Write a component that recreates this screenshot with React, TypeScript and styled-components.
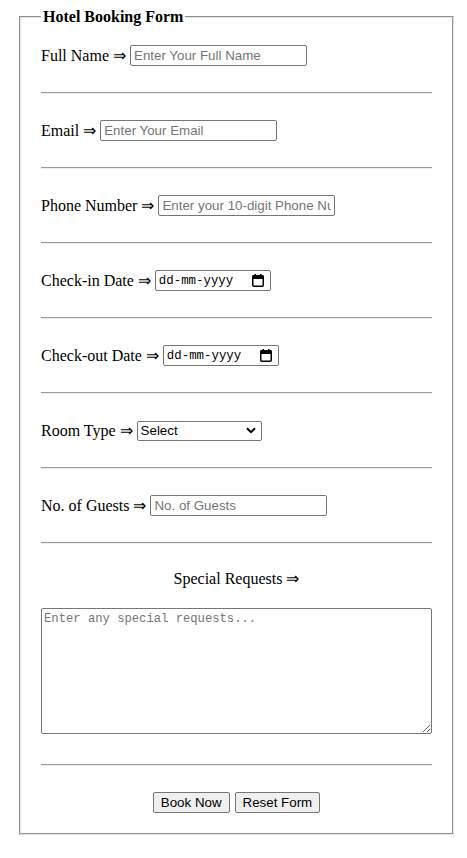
import React from 'react';
import styled, { createGlobalStyle } from 'styled-components';

const GlobalStyle = createGlobalStyle`
    body {
        margin: 8px;
        font-family: "Liberation Serif", "Times New Roman", serif;
        font-size: 16px;
        color: #000;
        background: #fff;
    }
`;

const Fieldset = styled.fieldset`
    width: 391px;
    margin: 0 0 0 11px;
    padding: 19px 20px 20px;
    border: 2px groove #e4e4e4;
`;

const Legend = styled.legend`
    font-weight: bold;
    padding: 0 2px;
`;

const Row = styled.div`
    display: flex;
    align-items: center;
    gap: 4px;
    height: 21px;
    white-space: nowrap;
`;

const Divider = styled.hr`
    margin: 26px 0;
    border: none;
    border-top: 1px solid #9a9a9a;
    border-bottom: 1px solid #eeeeee;
    height: 0;
`;

const TextInput = styled.input`
    box-sizing: border-box;
    width: 177px;
    height: 21px;
    padding: 1px 3px;
    border: 1px solid #767676;
    border-radius: 2px;
    font-family: "Liberation Sans", Arial, sans-serif;
    font-size: 13.333px;
    &::placeholder {
        color: #757575;
    }
`;

const DateBox = styled.div`
    box-sizing: border-box;
    display: inline-flex;
    align-items: center;
    justify-content: space-between;
    width: 116px;
    height: 21px;
    padding: 0 6px 0 3px;
    border: 1px solid #767676;
    border-radius: 2px;
`;

const DateInput = styled.input`
    width: 80px;
    padding: 0;
    border: none;
    outline: none;
    font-family: "Liberation Mono", Consolas, monospace;
    font-size: 12.4px;
    &::placeholder {
        color: #000;
    }
`;

const SelectWrap = styled.div`
    position: relative;
    display: inline-block;
`;

const Select = styled.select`
    box-sizing: border-box;
    width: 125px;
    height: 20px;
    padding: 0 0 0 3px;
    border: 1px solid #767676;
    border-radius: 2px;
    background: #fff;
    appearance: none;
    font-family: "Liberation Sans", Arial, sans-serif;
    font-size: 13.333px;
    color: #000;
`;

const Chevron = styled.svg`
    position: absolute;
    right: 6px;
    top: 6px;
    pointer-events: none;
`;

const CenterLabel = styled.div`
    text-align: center;
    line-height: 18px;
    margin-bottom: 20px;
`;

const TextArea = styled.textarea`
    display: block;
    box-sizing: border-box;
    width: 391px;
    height: 126px;
    padding: 3px 2px;
    border: 1px solid #767676;
    border-radius: 2px;
    font-family: "Liberation Mono", Consolas, monospace;
    font-size: 12.2px;
    &::placeholder {
        color: #757575;
    }
`;

const LastDivider = styled(Divider)`
    margin-top: 30px;
`;

const Buttons = styled.div`
    display: flex;
    justify-content: center;
    gap: 5px;
`;

const Button = styled.button`
    height: 21px;
    padding: 1px 7px;
    border: 1px solid #767676;
    border-radius: 2px;
    background: #efefef;
    font-family: "Liberation Sans", Arial, sans-serif;
    font-size: 13.333px;
    color: #000;
`;

const CalendarIcon = () => (
    <svg width="12" height="13" viewBox="0 0 12 13">
        <rect x="0.75" y="1.75" width="10.5" height="10.5" rx="1" fill="none" stroke="#000" strokeWidth="1.5" />
        <rect x="0.5" y="1.5" width="11" height="3.5" fill="#000" />
        <rect x="2.5" y="0" width="1.5" height="2" fill="#000" />
        <rect x="8" y="0" width="1.5" height="2" fill="#000" />
    </svg>
);

const DateField = () => (
    <DateBox>
        <DateInput type="text" placeholder="dd-mm-yyyy" />
        <CalendarIcon />
    </DateBox>
);

const fields = [
    { label: 'Full Name', placeholder: 'Enter Your Full Name' },
    { label: 'Email', placeholder: 'Enter Your Email' },
    { label: 'Phone Number', placeholder: 'Enter your 10-digit Phone Number' },
];

export default function App() {
    return (
        <>
            <GlobalStyle />
            <form onSubmit={(e) => e.preventDefault()}>
                <Fieldset>
                    <Legend>Hotel Booking Form</Legend>
                    {fields.map((f) => (
                        <React.Fragment key={f.label}>
                            <Row>
                                <label>{f.label} ⇒</label>
                                <TextInput type="text" placeholder={f.placeholder} />
                            </Row>
                            <Divider />
                        </React.Fragment>
                    ))}
                    <Row>
                        <label>Check-in Date ⇒</label>
                        <DateField />
                    </Row>
                    <Divider />
                    <Row>
                        <label>Check-out Date ⇒</label>
                        <DateField />
                    </Row>
                    <Divider />
                    <Row>
                        <label>Room Type ⇒</label>
                        <SelectWrap>
                            <Select defaultValue="">
                                <option value="">Select</option>
                                <option value="single">Single</option>
                                <option value="double">Double</option>
                                <option value="suite">Suite</option>
                            </Select>
                            <Chevron width="10" height="7" viewBox="0 0 10 7">
                                <path d="M1 1.2 L5 5.2 L9 1.2" fill="none" stroke="#000" strokeWidth="2" />
                            </Chevron>
                        </SelectWrap>
                    </Row>
                    <Divider />
                    <Row>
                        <label>No. of Guests ⇒</label>
                        <TextInput type="number" placeholder="No. of Guests" />
                    </Row>
                    <Divider />
                    <CenterLabel>Special Requests ⇒</CenterLabel>
                    <TextArea placeholder="Enter any special requests..." />
                    <LastDivider />
                    <Buttons>
                        <Button type="submit">Book Now</Button>
                        <Button type="reset">Reset Form</Button>
                    </Buttons>
                </Fieldset>
            </form>
        </>
    );
}
